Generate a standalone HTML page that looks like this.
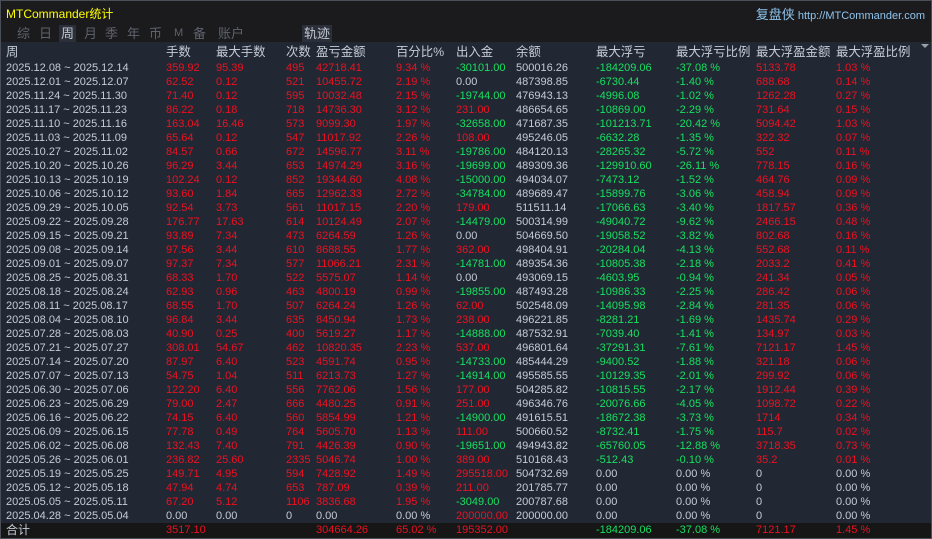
<!DOCTYPE html>
<html><head><meta charset="utf-8"><style>
body{margin:0;width:932px;height:539px;overflow:hidden;background:#1b1b1d;font-family:"Liberation Sans","Noto Sans CJK SC",sans-serif;position:relative}
#frame{position:absolute;left:0;top:0;width:930px;height:537px;border:1px solid #4a4e56}
#top{position:absolute;left:1px;top:1px;width:930px;height:41px;background:#1b1b1d}
.title{position:absolute;left:5px;top:4px;color:#ffff00;font-size:12px}
.right{position:absolute;right:6px;top:3px;color:#8ec4ee;font-size:11px}
.right b{font-weight:normal;font-size:13px}
.tab{position:absolute;top:24px;font-size:13px;color:#5e626c;line-height:17px}
.tab.on{color:#c4c8d0;background:#2a2f3a;padding:0 2px}
#tbl{position:absolute;left:1px;top:42px;width:930px;height:481px;background:#222833}
table{position:absolute;left:5px;top:2px;border-collapse:collapse;table-layout:fixed;font-size:11px}
td{padding:0;height:14px;line-height:14px;white-space:nowrap;overflow:hidden;color:#c4ccd8}
tr.h td{font-size:12.4px;height:17px;line-height:17px;color:#c4ccd8}
.r{color:#ee1020}.g{color:#16e060}
#tot{position:absolute;left:1px;top:523px;width:930px;height:15px;background:#161616}
#tot table{top:0}
</style></head><body>
<div id="top">
<div class="title">MTCommander统计</div>
<div class="right"><b>复盘侠</b> http://MTCommander.com</div>
<span class="tab" style="left:16px">综</span><span class="tab" style="left:38px">日</span><span class="tab on" style="left:58px">周</span><span class="tab" style="left:83px">月</span><span class="tab" style="left:104px">季</span><span class="tab" style="left:126px">年</span><span class="tab" style="left:148px">币</span><span class="tab" style="left:173px;font-size:11px">M</span><span class="tab" style="left:192px">备</span><span class="tab" style="left:217px">账户</span><span class="tab on" style="left:301px">轨迹</span>
</div>
<div id="tbl">
<div style="position:absolute;right:2px;top:2px;width:0;height:0;border-left:4px solid transparent;border-right:4px solid transparent;border-top:4px solid #9aa0a8"></div>
<table>
<colgroup><col style="width:160px"><col style="width:50px"><col style="width:70px"><col style="width:30px"><col style="width:80px"><col style="width:60px"><col style="width:60px"><col style="width:80px"><col style="width:80px"><col style="width:80px"><col style="width:80px"><col style="width:90px"></colgroup>
<tr class="h"><td>周</td><td>手数</td><td>最大手数</td><td>次数</td><td>盈亏金额</td><td>百分比%</td><td>出入金</td><td>余额</td><td>最大浮亏</td><td>最大浮亏比例</td><td>最大浮盈金额</td><td>最大浮盈比例</td></tr>
<tr><td>2025.12.08 ~ 2025.12.14</td><td class="r">359.92</td><td class="r">95.39</td><td class="r">495</td><td class="r">42718.41</td><td class="r">9.34 %</td><td class="g">-30101.00</td><td>500016.26</td><td class="g">-184209.06</td><td class="g">-37.08 %</td><td class="r">5133.78</td><td class="r">1.03 %</td></tr>
<tr><td>2025.12.01 ~ 2025.12.07</td><td class="r">62.52</td><td class="r">0.12</td><td class="r">521</td><td class="r">10455.72</td><td class="r">2.19 %</td><td>0.00</td><td>487398.85</td><td class="g">-6730.44</td><td class="g">-1.40 %</td><td class="r">688.68</td><td class="r">0.14 %</td></tr>
<tr><td>2025.11.24 ~ 2025.11.30</td><td class="r">71.40</td><td class="r">0.12</td><td class="r">595</td><td class="r">10032.48</td><td class="r">2.15 %</td><td class="g">-19744.00</td><td>476943.13</td><td class="g">-4996.08</td><td class="g">-1.02 %</td><td class="r">1262.28</td><td class="r">0.27 %</td></tr>
<tr><td>2025.11.17 ~ 2025.11.23</td><td class="r">86.22</td><td class="r">0.18</td><td class="r">718</td><td class="r">14736.30</td><td class="r">3.12 %</td><td class="r">231.00</td><td>486654.65</td><td class="g">-10869.00</td><td class="g">-2.29 %</td><td class="r">731.64</td><td class="r">0.15 %</td></tr>
<tr><td>2025.11.10 ~ 2025.11.16</td><td class="r">163.04</td><td class="r">16.46</td><td class="r">573</td><td class="r">9099.30</td><td class="r">1.97 %</td><td class="g">-32658.00</td><td>471687.35</td><td class="g">-101213.71</td><td class="g">-20.42 %</td><td class="r">5094.42</td><td class="r">1.03 %</td></tr>
<tr><td>2025.11.03 ~ 2025.11.09</td><td class="r">65.64</td><td class="r">0.12</td><td class="r">547</td><td class="r">11017.92</td><td class="r">2.26 %</td><td class="r">108.00</td><td>495246.05</td><td class="g">-6632.28</td><td class="g">-1.35 %</td><td class="r">322.32</td><td class="r">0.07 %</td></tr>
<tr><td>2025.10.27 ~ 2025.11.02</td><td class="r">84.57</td><td class="r">0.66</td><td class="r">672</td><td class="r">14596.77</td><td class="r">3.11 %</td><td class="g">-19786.00</td><td>484120.13</td><td class="g">-28265.32</td><td class="g">-5.72 %</td><td class="r">552</td><td class="r">0.11 %</td></tr>
<tr><td>2025.10.20 ~ 2025.10.26</td><td class="r">96.29</td><td class="r">3.44</td><td class="r">653</td><td class="r">14974.29</td><td class="r">3.16 %</td><td class="g">-19699.00</td><td>489309.36</td><td class="g">-129910.60</td><td class="g">-26.11 %</td><td class="r">778.15</td><td class="r">0.16 %</td></tr>
<tr><td>2025.10.13 ~ 2025.10.19</td><td class="r">102.24</td><td class="r">0.12</td><td class="r">852</td><td class="r">19344.60</td><td class="r">4.08 %</td><td class="g">-15000.00</td><td>494034.07</td><td class="g">-7473.12</td><td class="g">-1.52 %</td><td class="r">464.76</td><td class="r">0.09 %</td></tr>
<tr><td>2025.10.06 ~ 2025.10.12</td><td class="r">93.60</td><td class="r">1.84</td><td class="r">665</td><td class="r">12962.33</td><td class="r">2.72 %</td><td class="g">-34784.00</td><td>489689.47</td><td class="g">-15899.76</td><td class="g">-3.06 %</td><td class="r">458.94</td><td class="r">0.09 %</td></tr>
<tr><td>2025.09.29 ~ 2025.10.05</td><td class="r">92.54</td><td class="r">3.73</td><td class="r">561</td><td class="r">11017.15</td><td class="r">2.20 %</td><td class="r">179.00</td><td>511511.14</td><td class="g">-17066.63</td><td class="g">-3.40 %</td><td class="r">1817.57</td><td class="r">0.36 %</td></tr>
<tr><td>2025.09.22 ~ 2025.09.28</td><td class="r">176.77</td><td class="r">17.63</td><td class="r">614</td><td class="r">10124.49</td><td class="r">2.07 %</td><td class="g">-14479.00</td><td>500314.99</td><td class="g">-49040.72</td><td class="g">-9.62 %</td><td class="r">2466.15</td><td class="r">0.48 %</td></tr>
<tr><td>2025.09.15 ~ 2025.09.21</td><td class="r">93.89</td><td class="r">7.34</td><td class="r">473</td><td class="r">6264.59</td><td class="r">1.26 %</td><td>0.00</td><td>504669.50</td><td class="g">-19058.52</td><td class="g">-3.82 %</td><td class="r">802.68</td><td class="r">0.16 %</td></tr>
<tr><td>2025.09.08 ~ 2025.09.14</td><td class="r">97.56</td><td class="r">3.44</td><td class="r">610</td><td class="r">8688.55</td><td class="r">1.77 %</td><td class="r">362.00</td><td>498404.91</td><td class="g">-20284.04</td><td class="g">-4.13 %</td><td class="r">552.68</td><td class="r">0.11 %</td></tr>
<tr><td>2025.09.01 ~ 2025.09.07</td><td class="r">97.37</td><td class="r">7.34</td><td class="r">577</td><td class="r">11066.21</td><td class="r">2.31 %</td><td class="g">-14781.00</td><td>489354.36</td><td class="g">-10805.38</td><td class="g">-2.18 %</td><td class="r">2033.2</td><td class="r">0.41 %</td></tr>
<tr><td>2025.08.25 ~ 2025.08.31</td><td class="r">68.33</td><td class="r">1.70</td><td class="r">522</td><td class="r">5575.07</td><td class="r">1.14 %</td><td>0.00</td><td>493069.15</td><td class="g">-4603.95</td><td class="g">-0.94 %</td><td class="r">241.34</td><td class="r">0.05 %</td></tr>
<tr><td>2025.08.18 ~ 2025.08.24</td><td class="r">62.93</td><td class="r">0.96</td><td class="r">463</td><td class="r">4800.19</td><td class="r">0.99 %</td><td class="g">-19855.00</td><td>487493.28</td><td class="g">-10986.33</td><td class="g">-2.25 %</td><td class="r">286.42</td><td class="r">0.06 %</td></tr>
<tr><td>2025.08.11 ~ 2025.08.17</td><td class="r">68.55</td><td class="r">1.70</td><td class="r">507</td><td class="r">6264.24</td><td class="r">1.26 %</td><td class="r">62.00</td><td>502548.09</td><td class="g">-14095.98</td><td class="g">-2.84 %</td><td class="r">281.35</td><td class="r">0.06 %</td></tr>
<tr><td>2025.08.04 ~ 2025.08.10</td><td class="r">96.84</td><td class="r">3.44</td><td class="r">635</td><td class="r">8450.94</td><td class="r">1.73 %</td><td class="r">238.00</td><td>496221.85</td><td class="g">-8281.21</td><td class="g">-1.69 %</td><td class="r">1435.74</td><td class="r">0.29 %</td></tr>
<tr><td>2025.07.28 ~ 2025.08.03</td><td class="r">40.90</td><td class="r">0.25</td><td class="r">400</td><td class="r">5619.27</td><td class="r">1.17 %</td><td class="g">-14888.00</td><td>487532.91</td><td class="g">-7039.40</td><td class="g">-1.41 %</td><td class="r">134.97</td><td class="r">0.03 %</td></tr>
<tr><td>2025.07.21 ~ 2025.07.27</td><td class="r">308.01</td><td class="r">54.67</td><td class="r">462</td><td class="r">10820.35</td><td class="r">2.23 %</td><td class="r">537.00</td><td>496801.64</td><td class="g">-37291.31</td><td class="g">-7.61 %</td><td class="r">7121.17</td><td class="r">1.45 %</td></tr>
<tr><td>2025.07.14 ~ 2025.07.20</td><td class="r">87.97</td><td class="r">6.40</td><td class="r">523</td><td class="r">4591.74</td><td class="r">0.95 %</td><td class="g">-14733.00</td><td>485444.29</td><td class="g">-9400.52</td><td class="g">-1.88 %</td><td class="r">321.18</td><td class="r">0.06 %</td></tr>
<tr><td>2025.07.07 ~ 2025.07.13</td><td class="r">54.75</td><td class="r">1.04</td><td class="r">511</td><td class="r">6213.73</td><td class="r">1.27 %</td><td class="g">-14914.00</td><td>495585.55</td><td class="g">-10129.35</td><td class="g">-2.01 %</td><td class="r">299.92</td><td class="r">0.06 %</td></tr>
<tr><td>2025.06.30 ~ 2025.07.06</td><td class="r">122.20</td><td class="r">6.40</td><td class="r">556</td><td class="r">7762.06</td><td class="r">1.56 %</td><td class="r">177.00</td><td>504285.82</td><td class="g">-10815.55</td><td class="g">-2.17 %</td><td class="r">1912.44</td><td class="r">0.39 %</td></tr>
<tr><td>2025.06.23 ~ 2025.06.29</td><td class="r">79.00</td><td class="r">2.47</td><td class="r">666</td><td class="r">4480.25</td><td class="r">0.91 %</td><td class="r">251.00</td><td>496346.76</td><td class="g">-20076.66</td><td class="g">-4.05 %</td><td class="r">1098.72</td><td class="r">0.22 %</td></tr>
<tr><td>2025.06.16 ~ 2025.06.22</td><td class="r">74.15</td><td class="r">6.40</td><td class="r">560</td><td class="r">5854.99</td><td class="r">1.21 %</td><td class="g">-14900.00</td><td>491615.51</td><td class="g">-18672.38</td><td class="g">-3.73 %</td><td class="r">1714</td><td class="r">0.34 %</td></tr>
<tr><td>2025.06.09 ~ 2025.06.15</td><td class="r">77.78</td><td class="r">0.49</td><td class="r">764</td><td class="r">5605.70</td><td class="r">1.13 %</td><td class="r">111.00</td><td>500660.52</td><td class="g">-8732.41</td><td class="g">-1.75 %</td><td class="r">115.7</td><td class="r">0.02 %</td></tr>
<tr><td>2025.06.02 ~ 2025.06.08</td><td class="r">132.43</td><td class="r">7.40</td><td class="r">791</td><td class="r">4426.39</td><td class="r">0.90 %</td><td class="g">-19651.00</td><td>494943.82</td><td class="g">-65760.05</td><td class="g">-12.88 %</td><td class="r">3718.35</td><td class="r">0.73 %</td></tr>
<tr><td>2025.05.26 ~ 2025.06.01</td><td class="r">236.82</td><td class="r">25.60</td><td class="r">2335</td><td class="r">5046.74</td><td class="r">1.00 %</td><td class="r">389.00</td><td>510168.43</td><td class="g">-512.43</td><td class="g">-0.10 %</td><td class="r">35.2</td><td class="r">0.01 %</td></tr>
<tr><td>2025.05.19 ~ 2025.05.25</td><td class="r">149.71</td><td class="r">4.95</td><td class="r">594</td><td class="r">7428.92</td><td class="r">1.49 %</td><td class="r">295518.00</td><td>504732.69</td><td>0.00</td><td>0.00 %</td><td>0</td><td>0.00 %</td></tr>
<tr><td>2025.05.12 ~ 2025.05.18</td><td class="r">47.94</td><td class="r">4.74</td><td class="r">653</td><td class="r">787.09</td><td class="r">0.39 %</td><td class="r">211.00</td><td>201785.77</td><td>0.00</td><td>0.00 %</td><td>0</td><td>0.00 %</td></tr>
<tr><td>2025.05.05 ~ 2025.05.11</td><td class="r">67.20</td><td class="r">5.12</td><td class="r">1106</td><td class="r">3836.68</td><td class="r">1.95 %</td><td class="g">-3049.00</td><td>200787.68</td><td>0.00</td><td>0.00 %</td><td>0</td><td>0.00 %</td></tr>
<tr><td>2025.04.28 ~ 2025.05.04</td><td>0.00</td><td>0.00</td><td>0</td><td>0.00</td><td>0.00 %</td><td class="r">200000.00</td><td>200000.00</td><td>0.00</td><td>0.00 %</td><td>0</td><td>0.00 %</td></tr>
</table>
</div>
<div id="tot"><table>
<colgroup><col style="width:160px"><col style="width:50px"><col style="width:70px"><col style="width:30px"><col style="width:80px"><col style="width:60px"><col style="width:60px"><col style="width:80px"><col style="width:80px"><col style="width:80px"><col style="width:80px"><col style="width:90px"></colgroup>
<tr><td style="font-size:12px">合计</td><td class="r">3517.10</td><td></td><td></td><td class="r">304664.26</td><td class="r">65.02 %</td><td class="r">195352.00</td><td></td><td class="g">-184209.06</td><td class="g">-37.08 %</td><td class="r">7121.17</td><td class="r">1.45 %</td></tr>
</table></div>
<div id="frame"></div>
</body></html>
